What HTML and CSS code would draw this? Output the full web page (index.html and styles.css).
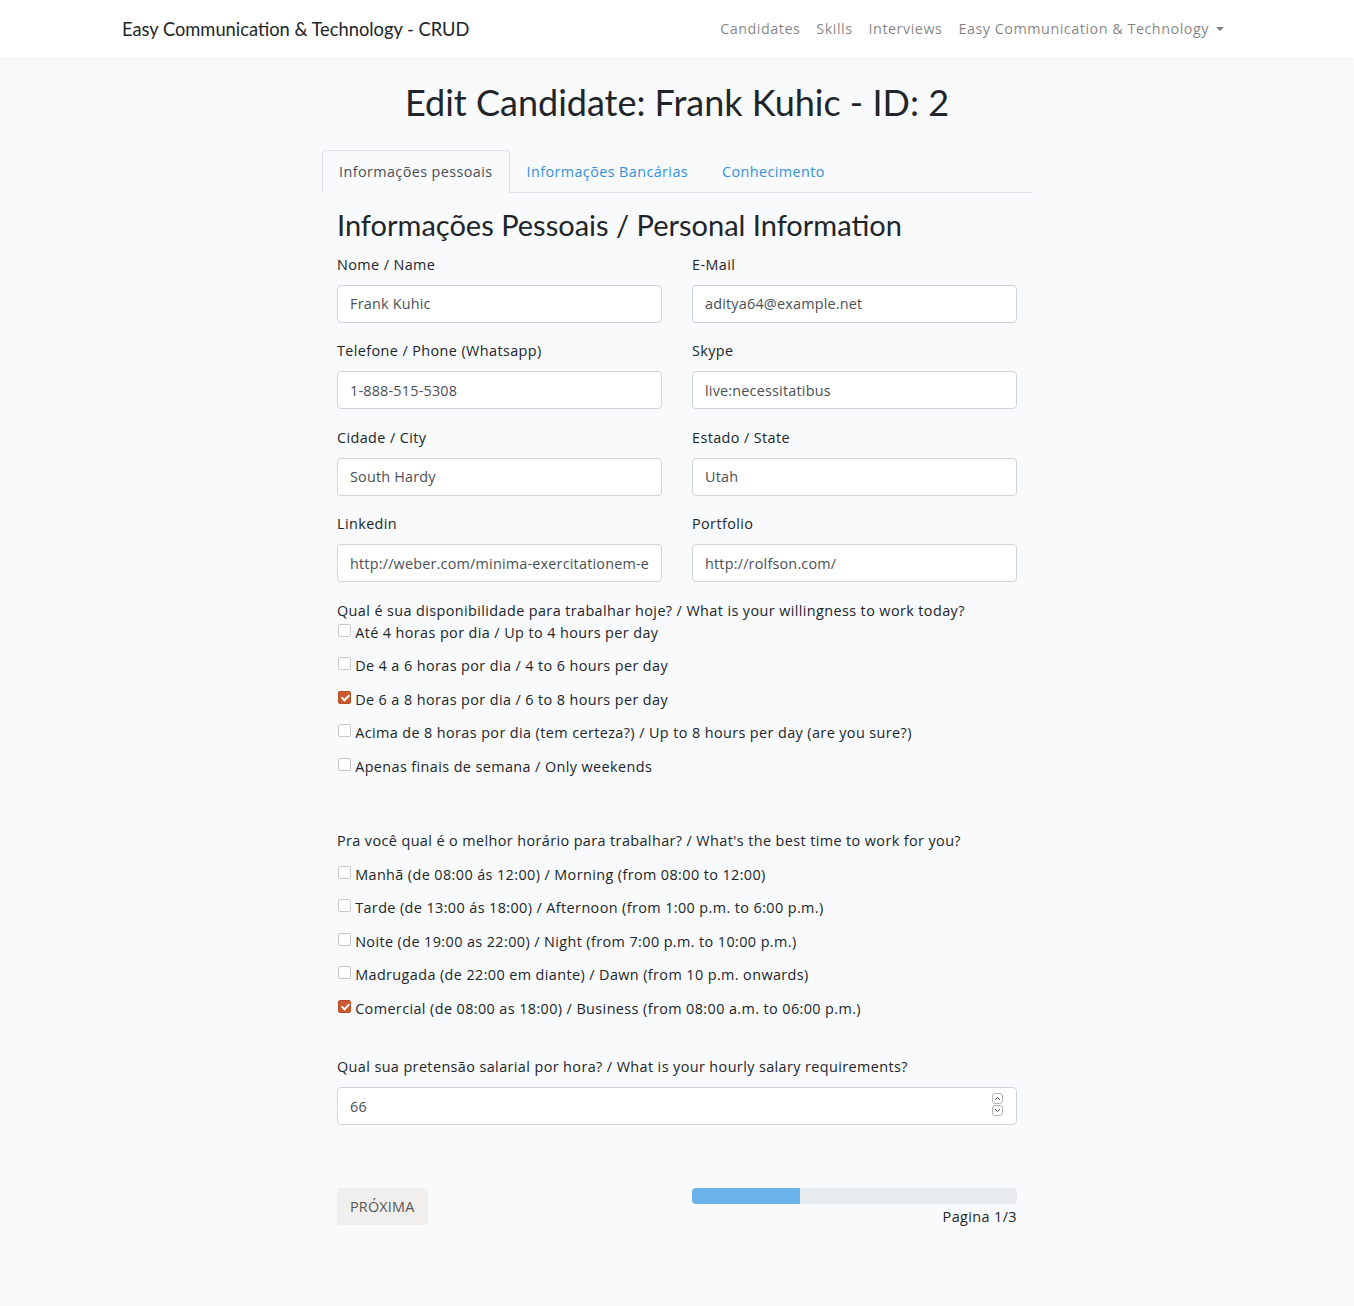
FILE: index.html
```html
<!DOCTYPE html>
<html lang="pt">
<head>
<meta charset="utf-8">
<title>Edit Candidate</title>
<link rel="stylesheet" href="styles.css">
</head>
<body>
<nav class="navbar">
  <div class="nav-container">
    <a class="brand" href="#">Easy Communication &amp; Technology - CRUD</a>
    <ul class="nav-links">
      <li><a href="#">Candidates</a></li>
      <li><a href="#">Skills</a></li>
      <li><a href="#">Interviews</a></li>
      <li><a href="#" class="dropdown">Easy Communication &amp; Technology<span class="caret"></span></a></li>
    </ul>
  </div>
</nav>
<main class="main">
  <h1 class="page-title">Edit Candidate: Frank Kuhic - ID: 2</h1>
  <div class="wrap">
    <ul class="tabs">
      <li><a href="#" class="tab active">Informações pessoais</a></li>
      <li><a href="#" class="tab">Informações Bancárias</a></li>
      <li><a href="#" class="tab">Conhecimento</a></li>
    </ul>
    <div class="pane">
      <h3 class="section-title">Informações Pessoais / Personal Information</h3>
      <div class="grid">
        <div class="group"><label class="lbl">Nome / Name</label><input class="ctl" type="text" value="Frank Kuhic"></div>
        <div class="group"><label class="lbl">E-Mail</label><input class="ctl" type="text" value="aditya64@example.net"></div>
        <div class="group"><label class="lbl">Telefone / Phone (Whatsapp)</label><input class="ctl" type="text" value="1-888-515-5308"></div>
        <div class="group"><label class="lbl">Skype</label><input class="ctl" type="text" value="live:necessitatibus"></div>
        <div class="group"><label class="lbl">Cidade / City</label><input class="ctl" type="text" value="South Hardy"></div>
        <div class="group"><label class="lbl">Estado / State</label><input class="ctl" type="text" value="Utah"></div>
        <div class="group"><label class="lbl">Linkedin</label><input class="ctl" type="text" value="http://weber.com/minima-exercitationem-eos-illum-quis"></div>
        <div class="group"><label class="lbl">Portfolio</label><input class="ctl" type="text" value="http://rolfson.com/"></div>
      </div>

      <div class="question first">Qual é sua disponibilidade para trabalhar hoje? / What is your willingness to work today?</div>
      <div class="options">
        <label class="opt"><input type="checkbox" class="chk"> Até 4 horas por dia / Up to 4 hours per day</label>
        <label class="opt"><input type="checkbox" class="chk"> De 4 a 6 horas por dia / 4 to 6 hours per day</label>
        <label class="opt"><input type="checkbox" class="chk" checked> De 6 a 8 horas por dia / 6 to 8 hours per day</label>
        <label class="opt"><input type="checkbox" class="chk"> Acima de 8 horas por dia (tem certeza?) / Up to 8 hours per day (are you sure?)</label>
        <label class="opt"><input type="checkbox" class="chk"> Apenas finais de semana / Only weekends</label>
      </div>

      <div class="question second">Pra você qual é o melhor horário para trabalhar? / What's the best time to work for you?</div>
      <div class="options">
        <label class="opt"><input type="checkbox" class="chk"> Manhã (de 08:00 ás 12:00) / Morning (from 08:00 to 12:00)</label>
        <label class="opt"><input type="checkbox" class="chk"> Tarde (de 13:00 ás 18:00) / Afternoon (from 1:00 p.m. to 6:00 p.m.)</label>
        <label class="opt"><input type="checkbox" class="chk"> Noite (de 19:00 as 22:00) / Night (from 7:00 p.m. to 10:00 p.m.)</label>
        <label class="opt"><input type="checkbox" class="chk"> Madrugada (de 22:00 em diante) / Dawn (from 10 p.m. onwards)</label>
        <label class="opt"><input type="checkbox" class="chk" checked> Comercial (de 08:00 as 18:00) / Business (from 08:00 a.m. to 06:00 p.m.)</label>
      </div>

      <div class="question third">Qual sua pretensão salarial por hora? / What is your hourly salary requirements?</div>
      <div class="num-wrap">
        <input class="ctl" type="text" value="66">
        <span class="spin">
          <span class="spin-btn"><svg width="7" height="5" viewBox="0 0 7 5"><path d="M1 4 L3.5 1.5 L6 4" fill="none" stroke="#555" stroke-width="1"/></svg></span>
          <span class="spin-btn"><svg width="7" height="5" viewBox="0 0 7 5"><path d="M1 1 L3.5 3.5 L6 1" fill="none" stroke="#555" stroke-width="1"/></svg></span>
        </span>
      </div>

      <div class="footer-row">
        <div class="col-left"><button class="btn-next" type="button">PRÓXIMA</button></div>
        <div class="col-right">
          <div class="progress"><div class="progress-bar" style="width:33.33%"></div></div>
          <div class="page-num">Pagina 1/3</div>
        </div>
      </div>
    </div>
  </div>
</main>
</body>
</html>
```
FILE: styles.css
```css
* { box-sizing: border-box; }
html, body { margin: 0; padding: 0; }
body {
  background: #f8fafc;
  color: #212529;
  font-family: "Open Sans", "Lato", sans-serif;
  font-size: 14.4px;
  letter-spacing: 0.4px;
  line-height: 1.6;
  min-height: 1306px;
}
a { text-decoration: none; }

.navbar {
  background: #fff;
  box-shadow: 0 2px 4px rgba(0,0,0,.04);
  height: 58px;
}
.nav-container {
  max-width: 1140px;
  margin: 0 auto;
  padding: 0 15px;
  height: 58px;
  display: flex;
  align-items: center;
  justify-content: space-between;
}
.brand {
  font-family: "Lato", sans-serif;
  letter-spacing: 0;
  color: #212529;
  font-size: 18.3px;
  line-height: 27px;
}
.nav-links {
  list-style: none;
  margin: 0;
  padding: 0;
  display: flex;
}
.nav-links a {
  display: block;
  padding: 8px 8px;
  color: rgba(0,0,0,.5);
  font-size: 14.4px;
  letter-spacing: 0.5px;
}
.caret {
  display: inline-block;
  margin-left: 7px;
  vertical-align: 3px;
  border-top: 4.3px solid;
  border-left: 4.3px solid transparent;
  border-right: 4.3px solid transparent;
}

.main { padding-top: 23px; }
.page-title {
  font-family: "Lato", sans-serif;
  letter-spacing: 0;
  margin: 0 0 26px;
  text-align: center;
  font-size: 36px;
  font-weight: 400;
  line-height: 1.2;
}
.wrap {
  width: 710px;
  margin: 0 auto;
}
.tabs {
  list-style: none;
  margin: 0;
  padding: 0;
  display: flex;
  border-bottom: 1px solid #dee2e6;
}
.tab {
  display: block;
  padding: 8.5px 16px 9px;
  margin-bottom: -1px;
  border: 1px solid transparent;
  border-radius: 4px 4px 0 0;
  color: #3490dc;
}
.tab.active {
  color: #495057;
  background: #f8fafc;
  border-color: #dee2e6 #dee2e6 #f8fafc;
}

.pane { padding: 0 15px; }
.section-title {
  font-family: "Lato", sans-serif;
  letter-spacing: 0;
  margin: 15px 0 10px;
  font-size: 29px;
  font-weight: 400;
  line-height: 1.2;
}
.grid {
  display: grid;
  grid-template-columns: 1fr 1fr;
  column-gap: 30px;
}
.group { margin-bottom: 16.5px; }
.lbl {
  display: block;
  margin-bottom: 9px;
}
.ctl {
  display: block;
  width: 100%;
  height: 38px;
  padding: 6px 12px;
  font-family: inherit;
  font-size: 14.4px;
  letter-spacing: 0.2px;
  color: #495057;
  background: #fff;
  border: 1px solid #ced4da;
  border-radius: 4px;
  outline: none;
}

.question.first { margin-top: 0; margin-bottom: -1px; }
.question.second { margin-top: 41px; margin-bottom: 10.5px; }
.question.third { margin-top: 25px; margin-bottom: 9px; }
.options { display: flex; flex-direction: column; }
.opt {
  display: flex;
  align-items: center;
  height: 23px;
  margin-bottom: 10.5px;
  white-space: pre;
}
.chk {
  -webkit-appearance: none;
  appearance: none;
  flex: none;
  width: 13px;
  height: 13px;
  margin: 0 0 0 1px;
  border: 1px solid #c9c9c9;
  border-radius: 2px;
  background: #fff;
  position: relative;
  top: -2px;
}
.chk:checked {
  background: #cc5a2e;
  border-color: #b94f27;
}
.chk:checked::after {
  content: "";
  position: absolute;
  left: 3.5px;
  top: 1px;
  width: 3px;
  height: 6px;
  border: solid #fff;
  border-width: 0 2px 2px 0;
  transform: rotate(45deg);
}

.num-wrap { position: relative; }
.spin {
  position: absolute;
  right: 14px;
  top: 6px;
  display: flex;
  flex-direction: column;
  gap: 1px;
}
.spin-btn {
  display: flex;
  align-items: center;
  justify-content: center;
  width: 11px;
  height: 11px;
  border: 1px solid #b5b5b5;
  border-radius: 3px;
  background: #fff;
}

.footer-row {
  display: grid;
  grid-template-columns: 1fr 1fr;
  column-gap: 30px;
  margin-top: 63px;
}
.btn-next {
  font-family: inherit;
  font-size: 14.4px;
  letter-spacing: 0.2px;
  line-height: 23px;
  padding: 6px 12px;
  color: #555;
  background: #f1efed;
  border: 1px solid #f1efed;
  border-radius: 4px;
}
.progress {
  height: 16px;
  background: #e9ecef;
  border-radius: 4px;
  overflow: hidden;
}
.progress-bar {
  height: 100%;
  background: #6cb2eb;
}
.page-num {
  text-align: right;
  margin-top: 1px;
}
```
